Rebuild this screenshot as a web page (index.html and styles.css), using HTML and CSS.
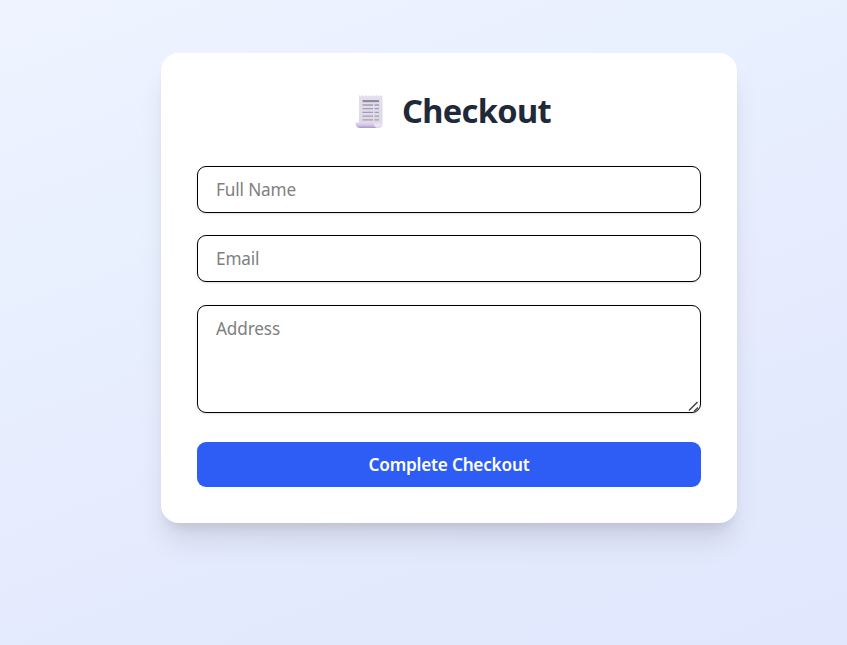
FILE: index.html
```html
<!DOCTYPE html>
<html lang="en">
<head>
<meta charset="utf-8">
<title>Checkout</title>
<link rel="stylesheet" href="styles.css">
</head>
<body>
<main class="page">
  <form class="card">
    <h1 class="title">
      <svg class="receipt" viewBox="0 0 28 34" aria-hidden="true">
        <defs>
          <linearGradient id="paper" x1="0" y1="0" x2="0" y2="1"><stop offset="0" stop-color="#e4dfec"/><stop offset="1" stop-color="#ddd8e8"/></linearGradient>
          <linearGradient id="roll" x1="0" y1="0" x2="0" y2="1"><stop offset="0" stop-color="#e3daf0"/><stop offset=".55" stop-color="#d0c1e2"/><stop offset="1" stop-color="#a993c5"/></linearGradient>
        </defs>
        <path fill="url(#paper)" d="M4 0 5.8 1.6 7.5 0 9.3 1.6 11 0 12.8 1.6 14.5 0 16.3 1.6 18 0 19.8 1.6 21.5 0 23.3 1.6 25 0 26.3 1.6 27.5 0V29Q27.5 33 23.5 33H8L4 28Z"/>
        <path fill="url(#roll)" d="M.5 27.5H18.5Q18.5 33 23.5 33H5.5Q.5 33 .5 27.5Z"/>
        <path fill="#e9e2f1" d="M19 28Q19 31.8 22 32.5Q27 32 27.5 28Z"/>
        <path fill="#918a9c" d="M7.5 5H24V7.2H7.5Z"/>
        <path stroke="#a49dac" stroke-width="1.3" d="M7.5 10H18M19.5 10H24M7.5 13.7H18M19.5 13.7H24M7.5 17.4H18M19.5 17.4H24M7.5 21.1H18M19.5 21.1H24M7.5 24.8H18M19.5 24.8H24"/>
      </svg>
      <span class="title-text">Checkout</span>
    </h1>
    <input class="field" type="text" placeholder="Full Name">
    <input class="field email" type="email" placeholder="Email">
    <div class="area-wrap">
      <textarea class="field area" placeholder="Address"></textarea>
      <svg class="grip" viewBox="0 0 12 12" aria-hidden="true"><path d="M1 9.5 9.5 1M6 10.5 10 6.5" fill="none" stroke="#444" stroke-width="1.5"/></svg>
    </div>
    <button class="submit" type="button">Complete Checkout</button>
  </form>
</main>
</body>
</html>
```
FILE: styles.css
```css
* { box-sizing: border-box; }
body {
  margin: 0;
  min-height: 645px;
  overflow: hidden;
  font-family: "Noto Sans", sans-serif;
  background: linear-gradient(160deg, #eef3ff, #e9f0fe 30%, #e4eafd 70%, #e1e7fd);
}
.page { padding: 53px 0 0 161px; }
.card {
  width: 576px;
  height: 470px;
  padding: 36px;
  border-radius: 18px;
  background: #fff;
  box-shadow: 0 22.5px 28px -5.6px rgba(0,0,0,.1), 0 9px 11.25px -6.75px rgba(0,0,0,.1);
}
.title {
  display: flex;
  justify-content: center;
  height: 45px;
  margin: 0 0 32px;
  font-size: 32.6px;
  line-height: 44px;
  font-weight: 700;
  color: #1e2939;
}
.receipt { width: 28px; height: 34px; margin: 6px 19px 0 8px; }
.title-text { width: 149px; white-space: nowrap; letter-spacing: -.65px; }
.field {
  display: block;
  width: 504px;
  height: 47px;
  margin: 0 0 22px;
  padding: 0 18px;
  border: 1px solid #000;
  border-radius: 9px;
  background: #fff;
  font: 400 17.2px/27px "Noto Sans", sans-serif;
  letter-spacing: -.15px;
  outline: none;
  box-shadow: 0 1px 3px rgba(0,0,0,.1), 0 1px 2px -1px rgba(0,0,0,.1);
}
.field::placeholder { color: #808080; opacity: 1; }
.email { margin-bottom: 23px; }
.area-wrap { position: relative; height: 108px; margin-bottom: 29px; }
.area { height: 108px; padding: 9px 18px; resize: none; overflow: hidden; }
.grip { position: absolute; right: 1px; bottom: 0; width: 12px; height: 12px; }
.submit {
  display: block;
  width: 504px;
  height: 45px;
  padding: 0;
  border: 0;
  border-radius: 9px;
  background: #2d5df4;
  color: #fff;
  font: 600 17.2px/45px "Noto Sans", sans-serif;
  letter-spacing: -.22px;
}
```
